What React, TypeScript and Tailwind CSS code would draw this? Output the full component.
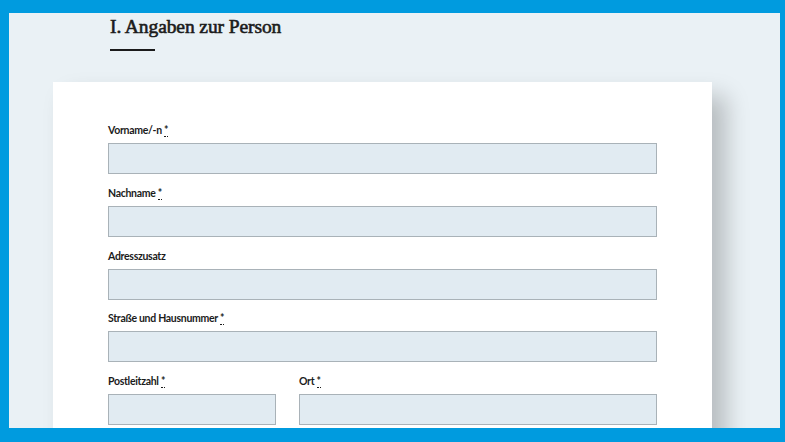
function Label({ text, required }: { text: string; required?: boolean }) {
  return (
    <label className="block h-4 mb-[5px] text-[10.5px] leading-4 font-bold tracking-[-0.3px] text-[#1b1b1b]">
      {text}
      {required && (
        <>
          {" "}
          <abbr title="Pflichtfeld" className="no-underline border-b border-dotted border-[#1b1b1b]">
            *
          </abbr>
        </>
      )}
    </label>
  );
}

function Input() {
  return <input type="text" className="block w-full h-[31px] bg-[#e1ebf2] border border-[#a9b2b8] outline-none" />;
}

function Field({ text, required }: { text: string; required?: boolean }) {
  return (
    <div className="mb-[10.75px]">
      <Label text={text} required={required} />
      <Input />
    </div>
  );
}

export default function App() {
  return (
    <div
      className="w-[785px] h-[442px] bg-[#009bdf] pt-[13px] pl-[9px] pr-[5px] pb-[14px] overflow-hidden"
      style={{ fontFamily: "Lato, 'Liberation Sans', sans-serif" }}
    >
      <div className="w-full h-full bg-[#eaf1f5] overflow-hidden">
        <div className="pl-[101px] pt-[2px]">
          <h1
            className="text-[19.5px] leading-[24px] font-normal tracking-[-0.1px] text-[#1b1b1b] [-webkit-text-stroke:0.6px_#1b1b1b]"
            style={{ fontFamily: "'Liberation Serif', serif" }}
          >
            I. Angaben zur Person
          </h1>
          <div className="w-[45px] h-[2px] bg-[#1b1b1b] mt-[10px]" />
        </div>
        <div className="ml-[44px] mt-[31px] w-[659px] bg-white pt-[40px] px-[55px] pb-10 shadow-[14px_14px_22px_rgba(0,0,0,0.22)]">
          <Field text="Vorname/-n" required />
          <Field text="Nachname" required />
          <Field text="Adresszusatz" />
          <Field text="Straße und Hausnummer" required />
          <div className="grid grid-cols-[168px_1fr] gap-x-[23px]">
            <Field text="Postleitzahl" required />
            <Field text="Ort" required />
          </div>
        </div>
      </div>
    </div>
  );
}
